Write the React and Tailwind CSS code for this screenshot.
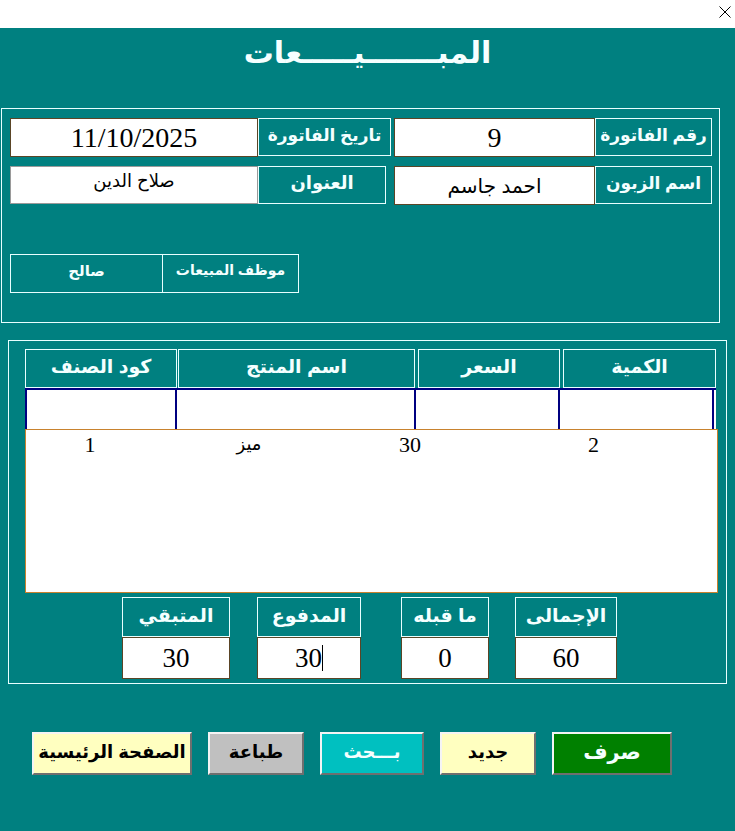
import React from "react";

const serif = "font-['Liberation_Serif','DejaVu_Serif',serif]";
const sans = "font-['Liberation_Sans','DejaVu_Sans',sans-serif]";

function Label({ w, h = "h-[38px]", size = "text-[17px]", children }) {
  return (
    <div
      className={`${w} ${h} border border-[#e8ffff] bg-[#008080] text-[#f4ffff] font-bold ${size} ${sans} whitespace-nowrap flex items-center justify-center leading-none pb-1`}
      dir="rtl"
    >
      {children}
    </div>
  );
}

function Field({ w, h = "h-[39px]", className = "", children }) {
  return (
    <div
      className={`${w} ${h} bg-white border border-[#5a4526] text-black flex items-center justify-center leading-none whitespace-nowrap ${className}`}
      dir="rtl"
    >
      {children}
    </div>
  );
}

function Btn({ w, bg, text, size = "text-[18px]", children }) {
  return (
    <div
      className={`${w} h-[43px] ${bg} ${text} border-2 border-t-[#f4f4f4] border-l-[#f4f4f4] border-b-[#6f6f6f] border-r-[#6f6f6f] font-bold ${size} ${sans} whitespace-nowrap flex items-center justify-center leading-none pb-1`}
      dir="rtl"
    >
      {children}
    </div>
  );
}

export default function App() {
  return (
    <div className="w-[735px] h-[831px] bg-[#008080] flex flex-col overflow-hidden">
      {/* title bar */}
      <div className="h-[28px] bg-white flex justify-end items-start pt-[6px] pr-[4px]">
        <svg width="12" height="12" viewBox="0 0 12 12">
          <path d="M0.5 0.5 L11.5 11.5 M11.5 0.5 L0.5 11.5" stroke="#000" strokeWidth="1" />
        </svg>
      </div>

      {/* heading */}
      <div className="h-[80px] flex justify-center pt-[10px]">
        <h1
          dir="rtl"
          className={`${sans} font-bold text-[30px] text-[#f6ffff] leading-none whitespace-nowrap`}
        >
          المبـــــــيـــــعات
        </h1>
      </div>

      {/* invoice panel */}
      <div className="ml-[1px] w-[719px] h-[215px] border border-[#e8ffff] pt-[9px] pl-[8px] flex flex-col">
        <div className="flex items-start">
          <Field w="w-[248px]" className={`${serif} text-[28px]`}>11/10/2025</Field>
          <Label w="w-[133px]">تاريخ الفاتورة</Label>
          <div className="w-[3px]" />
          <Field w="w-[201px]" className={`${serif} text-[28px]`}>9</Field>
          <Label w="w-[117px]">رقم الفاتورة</Label>
        </div>
        <div className="flex items-start mt-[9px]">
          <Field w="w-[248px]" h="h-[38px]" className={`${sans} text-[18px] border-[#9a9a9a] pb-2`}>
            صلاح الدين
          </Field>
          <Label w="w-[128px]" size="text-[18px]">العنوان</Label>
          <div className="w-[8px]" />
          <Field w="w-[201px]" className={`${sans} text-[20px]`}>احمد جاسم</Field>
          <Label w="w-[117px]">اسم الزبون</Label>
        </div>
        <div className="flex mt-[49px]">
          <div
            dir="rtl"
            className={`w-[153px] h-[39px] border border-[#e8ffff] text-[#f4ffff] font-bold text-[15px] ${sans} flex justify-center pt-[5px] whitespace-nowrap`}
          >
            صالح
          </div>
          <div
            dir="rtl"
            className={`w-[136px] h-[39px] border border-l-0 border-[#e8ffff] text-[#f4ffff] font-bold text-[14px] ${sans} flex justify-center pt-[5px] whitespace-nowrap`}
          >
            موظف المبيعات
          </div>
        </div>
      </div>

      {/* items panel */}
      <div className="mt-[17px] ml-[8px] w-[719px] h-[344px] border border-[#e8ffff] pt-[8px] pl-[16px] flex flex-col">
        <div className="flex">
          <Label w="w-[152px]" h="h-[39px]" size="text-[19px]">كود الصنف</Label>
          <div className="w-[1px]" />
          <Label w="w-[237px]" h="h-[39px]" size="text-[19px]">اسم المنتج</Label>
          <div className="w-[3px]" />
          <Label w="w-[142px]" h="h-[39px]" size="text-[19px]">السعر</Label>
          <div className="w-[3px]" />
          <Label w="w-[153px]" h="h-[39px]" size="text-[19px]">الكمية</Label>
        </div>
        <div className="flex h-[41px] w-[691px] bg-white border-t-2 border-[#000080]">
          <div className="w-[152px] border-l-2 border-r-2 border-[#000080]" />
          <div className="w-[239px] border-r-2 border-[#000080]" />
          <div className="w-[144px] border-r-2 border-[#000080]" />
          <div className="w-[154px] border-r-2 border-[#000080]" />
        </div>
        <div className="w-[693px] h-[164px] bg-white border border-[#c8822e]">
          <div className={`flex h-[28px] items-center ${serif} text-[22px] text-black`}>
            <div className="w-[128px] text-center">1</div>
            <div className={`w-[190px] text-center ${sans} text-[18px]`} dir="rtl">ميز</div>
            <div className="w-[77px] text-right">30</div>
            <div className="w-[178px] text-right">2</div>
          </div>
        </div>
        <div className="flex mt-[4px]">
          {[
            ["w-[108px]", "ml-[97px]", "المتبقي", "30", false],
            ["w-[104px]", "ml-[27px]", "المدفوع", "30", true],
            ["w-[88px]", "ml-[40px]", "ما قبله", "0", false],
            ["w-[102px]", "ml-[26px]", "الإجمالى", "60", false],
          ].map(([w, ml, label, val, caret]) => (
            <div key={label} className={`${w} ${ml} flex flex-col`}>
              <Label w="w-full" h="h-[40px]" size="text-[19px]">{label}</Label>
              <div className={`w-full h-[42px] bg-white border border-[#5a4526] flex items-center justify-center ${serif} text-[27px] text-black leading-none`}>
                {val}
                {caret && <span className="inline-block w-[1px] h-[26px] bg-black" />}
              </div>
            </div>
          ))}
        </div>
      </div>

      {/* buttons */}
      <div className="flex mt-[48px] pl-[32px]">
        <Btn w="w-[160px]" bg="bg-[#ffffc0]" text="text-black">الصفحة الرئيسية</Btn>
        <div className="w-[16px]" />
        <Btn w="w-[96px]" bg="bg-[#c0c0c0]" text="text-black">طباعة</Btn>
        <div className="w-[16px]" />
        <Btn w="w-[104px]" bg="bg-[#00c0c0]" text="text-[#f4ffff]">بـــحث</Btn>
        <div className="w-[16px]" />
        <Btn w="w-[96px]" bg="bg-[#ffffc0]" text="text-black">جديد</Btn>
        <div className="w-[16px]" />
        <Btn w="w-[120px]" bg="bg-[#008000]" text="text-[#f4ffff]" size="text-[21px]">صرف</Btn>
      </div>
    </div>
  );
}
